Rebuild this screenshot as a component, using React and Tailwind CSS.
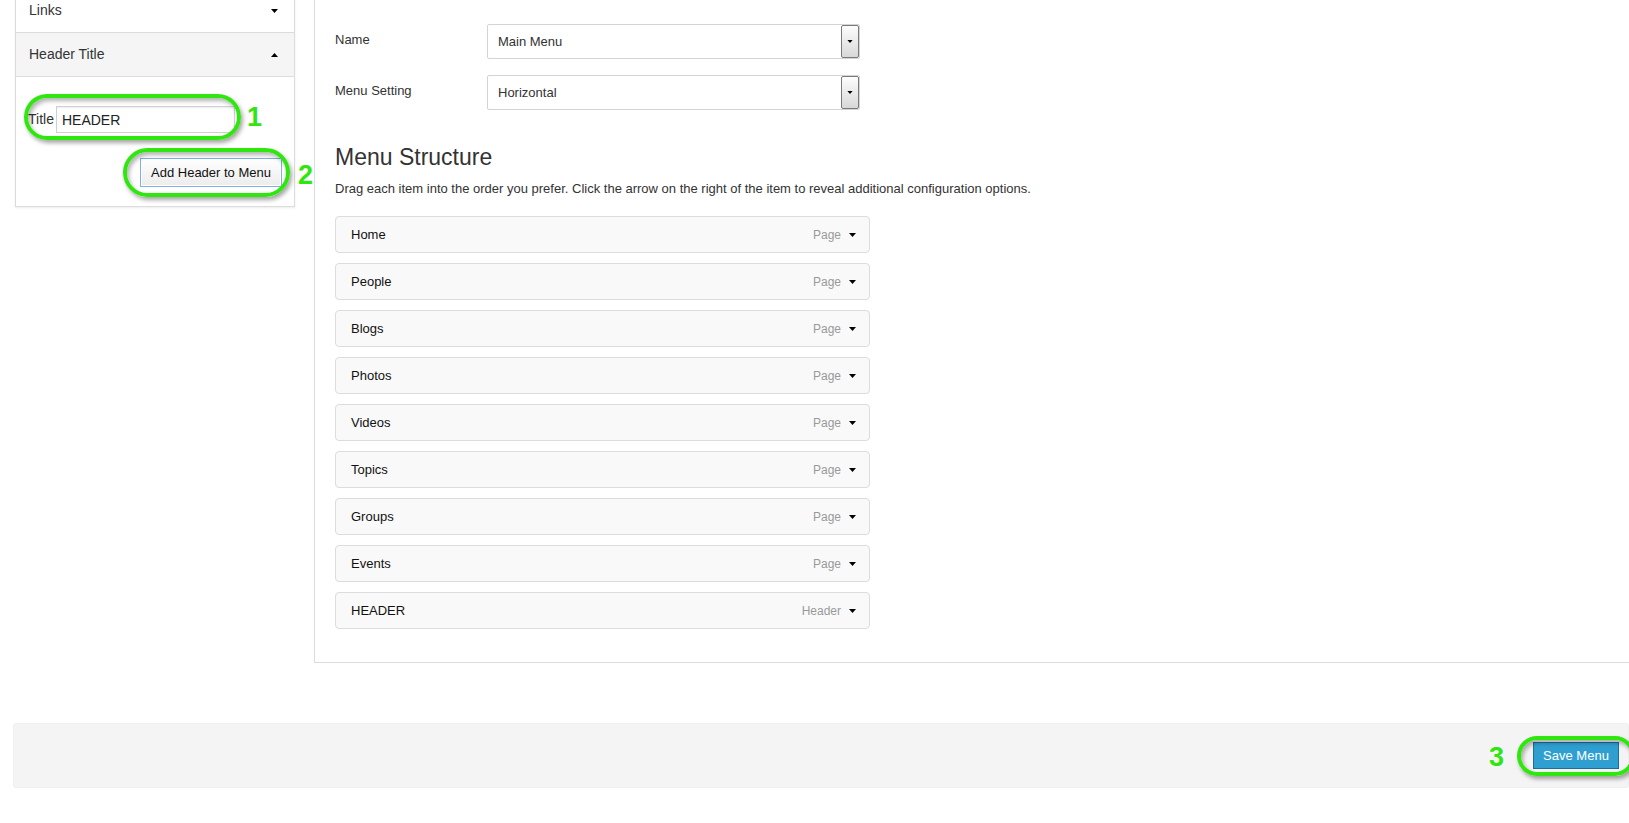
import { useState } from "react";

const menuItems = [
  { label: "Home", type: "Page" },
  { label: "People", type: "Page" },
  { label: "Blogs", type: "Page" },
  { label: "Photos", type: "Page" },
  { label: "Videos", type: "Page" },
  { label: "Topics", type: "Page" },
  { label: "Groups", type: "Page" },
  { label: "Events", type: "Page" },
  { label: "HEADER", type: "Header" },
];

function Caret({ up = false, className = "" }) {
  return (
    <svg width="7" height="4" viewBox="0 0 7 4" className={className} aria-hidden="true">
      <path d={up ? "M0 4 L3.5 0 L7 4 Z" : "M0 0 L7 0 L3.5 4 Z"} fill="#000" />
    </svg>
  );
}

function SelectBox({ value }) {
  return (
    <div className="flex h-[35px] w-[373px] items-center justify-between rounded-[2px] border border-[#d4d4d4] bg-white pl-[10px] text-[13px] text-[#333]">
      <span>{value}</span>
      <span className="flex h-[33px] w-[18px] items-center justify-center rounded-[2px] border border-[#7a7a7a] bg-gradient-to-b from-[#fdfdfd] to-[#d8d8d8]">
        <Caret className="h-[3px] w-[6px]" />
      </span>
    </div>
  );
}

function Mark({ className }) {
  return (
    <div
      className={`absolute rounded-full border-[4px] border-[#2fe60f] shadow-[2px_3px_4px_rgba(0,0,0,0.35),inset_2px_3px_4px_rgba(0,0,0,0.3)] ${className}`}
    />
  );
}

function Step({ n, className }) {
  return (
    <span className={`absolute text-[27px] font-bold leading-none text-[#2fe60f] ${className}`}>{n}</span>
  );
}

export default function App() {
  const [title, setTitle] = useState("HEADER");

  return (
    <div className="relative h-[823px] w-[1629px] overflow-hidden bg-white font-['Liberation_Sans',Arial,sans-serif]">
      <div className="flex items-start">
        {/* sidebar accordion */}
        <aside className="-mt-[12px] ml-[15px] w-[280px] border border-[#dcdcdc] bg-white shadow-[0_1px_2px_rgba(0,0,0,0.08)]">
          <div className="flex h-[44px] items-center justify-between border-b border-[#dcdcdc] pl-[13px] pr-[16px] text-[14px] text-[#333]">
            <span>Links</span>
            <Caret />
          </div>
          <div className="flex h-[44px] items-center justify-between border-b border-[#dcdcdc] bg-[#f5f5f5] pl-[13px] pr-[16px] text-[14px] text-[#333]">
            <span>Header Title</span>
            <Caret up />
          </div>
          <div className="flex flex-col pl-[12px] pr-[12px] pt-[29px] pb-[19px]">
            <label className="flex items-center text-[14px] text-[#333]">
              <span>Title</span>
              <input
                value={title}
                onChange={(e) => setTitle(e.target.value)}
                className="ml-[2px] h-[27px] w-[179px] border border-[#d0d0d0] px-[5px] text-[14px] text-[#222] shadow-[inset_0_1px_2px_rgba(0,0,0,0.08)] outline-none"
              />
            </label>
            <button
              type="button"
              className="mt-[25px] h-[29px] w-[142px] self-end border border-[#7fb0e0] bg-gradient-to-b from-white to-[#ececec] text-[13px] text-[#111] shadow-[inset_0_0_0_1px_#fff]"
            >
              Add Header to Menu
            </button>
          </div>
        </aside>

        {/* menu editor */}
        <main className="ml-[19px] flex-1 border-b border-l border-[#dcdcdc] pb-[33px] pl-[20px] pt-[24px]">
          <div className="flex flex-col gap-[16px]">
            <div className="flex items-center">
              <span className="w-[152px] pb-[4px] text-[13px] text-[#333]">Name</span>
              <SelectBox value="Main Menu" />
            </div>
            <div className="flex items-center">
              <span className="w-[152px] pb-[4px] text-[13px] text-[#333]">Menu Setting</span>
              <SelectBox value="Horizontal" />
            </div>
          </div>

          <h2 className="mt-[33px] text-[23px] leading-[28px] text-[#333]">Menu Structure</h2>
          <p className="mt-[9px] text-[13px] leading-[18px] text-[#333]">
            Drag each item into the order you prefer. Click the arrow on the right of the item to reveal additional
            configuration options.
          </p>

          <ul className="mt-[18px] flex w-[535px] flex-col gap-[10px]">
            {menuItems.map((item) => (
              <li
                key={item.label}
                className="flex h-[37px] items-center justify-between rounded-[4px] border border-[#dcdcdc] bg-[#f9f9f9] pl-[15px] pr-[13px]"
              >
                <span className="text-[13px] text-[#111]">{item.label}</span>
                <span className="flex items-center gap-[8px]">
                  <span className="text-[12px] text-[#999]">{item.type}</span>
                  <Caret />
                </span>
              </li>
            ))}
          </ul>
        </main>
      </div>

      <footer className="ml-[13px] mt-[60px] flex h-[65px] items-center justify-end rounded-[3px] border border-[#efefef] bg-[#f4f4f4] pr-[9px]">
        <button
          type="button"
          className="h-[27px] w-[86px] border border-[#1d6f96] bg-[#2f9fd1] text-[13px] text-white"
        >
          Save Menu
        </button>
      </footer>

      {/* numbered callouts */}
      <Mark className="left-[24px] top-[94px] h-[46px] w-[217px]" />
      <Step n="1" className="left-[247px] top-[104px]" />
      <Mark className="left-[123px] top-[148px] h-[49px] w-[167px]" />
      <Step n="2" className="left-[298px] top-[162px]" />
      <Mark className="left-[1517px] top-[736px] h-[40px] w-[118px]" />
      <Step n="3" className="left-[1489px] top-[744px]" />
    </div>
  );
}
